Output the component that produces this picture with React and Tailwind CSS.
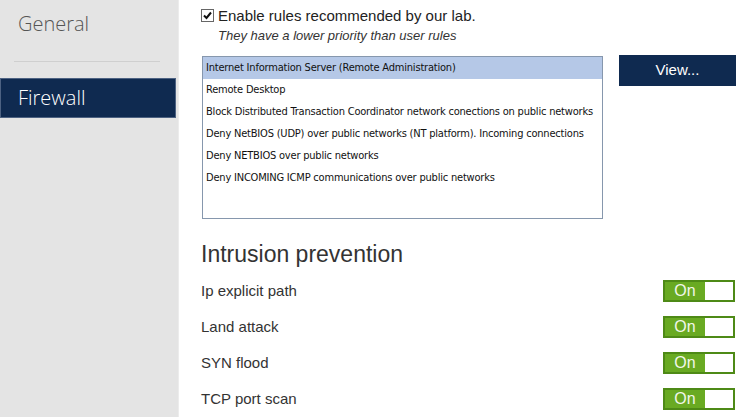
import React from "react";

const rules = [
  "Internet Information Server (Remote Administration)",
  "Remote Desktop",
  "Block Distributed Transaction Coordinator network conections on public networks",
  "Deny NetBIOS (UDP) over public networks (NT platform). Incoming connections",
  "Deny NETBIOS over public networks",
  "Deny INCOMING ICMP communications over public networks",
];

const prevention = ["Ip explicit path", "Land attack", "SYN flood", "TCP port scan"];

function Toggle() {
  return (
    <div className="flex w-[72px] h-[22px] border-2 border-[#4e8a16] bg-white">
      <div className="w-[40px] h-full bg-[#69aa22] flex items-center justify-center text-[16px] leading-none text-[#f2f7ea] font-['Liberation_Sans',Arial,sans-serif]">
        On
      </div>
    </div>
  );
}

export default function App() {
  return (
    <div className="w-[744px] h-[417px] flex overflow-hidden bg-white font-['Liberation_Sans',Arial,sans-serif]">
      <div className="w-[179px] shrink-0 bg-[#e4e4e4] border-r border-[#ececec] flex flex-col">
        <div className="h-[46px] pl-[18px] pt-[10px] text-[20px] font-light text-[#555] font-['Open_Sans',sans-serif] leading-[28px]">
          General
        </div>
        <div className="mx-[14px] mt-[15px] h-px bg-[#cfcfcf] w-[146px]" />
        <div className="mt-[16px] w-[176px] h-[40px] bg-[#0f2a50] border border-[#4d6282] pl-[17px] flex items-center text-[20px] font-light text-white font-['Open_Sans',sans-serif]">
          Firewall
        </div>
      </div>
      <div className="flex-1 pl-[22px] pt-[6px]">
        <div className="flex items-center h-[19px]">
          <div className="w-[13px] h-[13px] border border-[#666] bg-white flex items-center justify-center">
            <svg width="9" height="9" viewBox="0 0 9 9">
              <path d="M1 4.5 L3.5 7 L8 1.5" fill="none" stroke="#111" strokeWidth="2" />
            </svg>
          </div>
          <span className="ml-[4px] text-[15px] text-[#222] leading-none">Enable rules recommended by our lab.</span>
        </div>
        <div className="ml-[17px] mt-[3px] text-[13px] italic text-[#333] leading-[16px]">
          They have a lower priority than user rules
        </div>
        <div className="flex mt-[12px]">
          <div className="ml-[1px] w-[401px] h-[163px] border border-[#8697ad] bg-white">
            {rules.map((r, i) => (
              <div
                key={r}
                className={`h-[22px] pl-[3px] flex items-center text-[11px] text-[#111] font-['DejaVu_Sans_Condensed','Liberation_Sans',sans-serif] tracking-[-0.2px] whitespace-nowrap ${
                  i === 0 ? "bg-[#b5c8e7]" : ""
                }`}
              >
                {r}
              </div>
            ))}
          </div>
          <div className="ml-[16px] w-[117px] h-[31px] -mt-[1px] bg-[#0f2a50] flex items-center justify-center text-white text-[15px]">
            View...
          </div>
        </div>
        <div className="mt-[21px] text-[23px] text-[#333] leading-[28px]">Intrusion prevention</div>
        <div className="mt-[12px] flex flex-col gap-[14px] pr-[9px]">
          {prevention.map((p) => (
            <div key={p} className="flex items-center justify-between h-[22px]">
              <span className="text-[15px] text-[#333]">{p}</span>
              <Toggle />
            </div>
          ))}
        </div>
      </div>
    </div>
  );
}
